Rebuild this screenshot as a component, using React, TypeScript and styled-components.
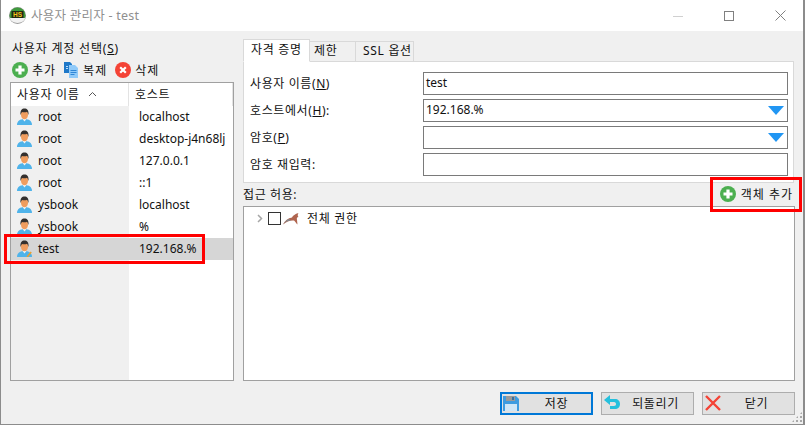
import React from "react";
import styled, { createGlobalStyle } from "styled-components";

const GlobalStyle = createGlobalStyle`
  html, body {
    margin: 0;
    padding: 0;
    background: #fff;
  }
  body {
    font-family: "Noto Sans", "Noto Sans CJK KR", sans-serif;
    font-size: 12px;
    color: #111;
  }
  * {
    box-sizing: border-box;
  }
`;

const Window = styled.div`
  position: relative;
  width: 805px;
  height: 425px;
  display: flex;
  flex-direction: column;
  background: #f0f0f0;
  border: 1px solid #8c8c8c;
  border-top: none;
  border-right-width: 2px;
  overflow: hidden;
`;

const TitleBar = styled.div`
  height: 31px;
  flex: none;
  display: flex;
  align-items: center;
  background: #fff;
  padding-left: 8px;
  gap: 5px;
`;

const TitleText = styled.div`
  flex: 1;
  color: #8f8f8f;
  font-size: 12.5px;
  letter-spacing: 0.25px;
  padding-bottom: 2px;
`;

const WinButton = styled.div`
  width: 46px;
  height: 31px;
  display: flex;
  align-items: center;
  justify-content: center;
`;

const Body = styled.div`
  flex: 1;
  min-height: 0;
  display: flex;
  padding: 8px 8px 0 9px;
  gap: 9px;
`;

const LeftPane = styled.div`
  width: 224px;
  flex: none;
  display: flex;
  flex-direction: column;
`;

const PaneTitle = styled.div`
  height: 20px;
  line-height: 19px;
  padding-left: 2px;
  letter-spacing: 0.8px;
`;

const Toolbar = styled.div`
  height: 23px;
  display: flex;
  align-items: center;
  padding: 0 0 2px 2px;
  gap: 8px;
`;

const ToolItem = styled.div`
  display: flex;
  align-items: center;
  gap: 4px;
  letter-spacing: 1px;
`;

const UserList = styled.div`
  height: 299px;
  background: #fff;
  border: 1px solid #a0a0a0;
  display: flex;
  flex-direction: column;
  position: relative;
`;

const ListHeader = styled.div`
  height: 23px;
  flex: none;
  display: grid;
  grid-template-columns: 118px 1fr;
  align-items: center;
`;

const HeadCell = styled.div`
  height: 23px;
  line-height: 21px;
  padding: 0 0 1px 6px;
  border-right: 1px solid #e3e3e3;
  display: flex;
  align-items: center;
  gap: 8px;
  letter-spacing: 0.7px;
`;

const Rows = styled.div`
  flex: 1;
  display: grid;
  grid-template-columns: 118px 1fr;
  grid-auto-rows: 22px;
  background: linear-gradient(to right, #f0f0f0 118px, #fff 118px);
`;

const Row = styled.div<{ $selected?: boolean }>`
  grid-column: 1 / -1;
  display: grid;
  grid-template-columns: 118px 1fr;
  align-items: center;
  padding-bottom: 1px;
  background: ${(props) => (props.$selected ? "#d6d6d6" : "transparent")};
`;

const UserCell = styled.div`
  display: flex;
  align-items: center;
  padding-left: 6px;
  gap: 6px;
`;

const HostCell = styled.div`
  padding-left: 10px;
`;

const RightPane = styled.div`
  flex: 1;
  min-width: 0;
  display: flex;
  flex-direction: column;
`;

const Tabs = styled.div`
  height: 23px;
  flex: none;
  display: flex;
  align-items: flex-end;
  position: relative;
  z-index: 1;
`;

const Tab = styled.div<{ $active?: boolean; $width: number; $pad: number }>`
  width: ${(props) => props.$width}px;
  height: ${(props) => (props.$active ? 23 : 21)}px;
  line-height: 17px;
  padding-left: ${(props) => props.$pad}px;
  padding-top: ${(props) => (props.$active ? 1 : 0)}px;
  background: ${(props) => (props.$active ? "#fff" : "#f0f0f0")};
  border: 1px solid #d9d9d9;
  border-left-width: ${(props) => (props.$active ? 1 : 0)}px;
  border-bottom-color: ${(props) => (props.$active ? "#fff" : "#d9d9d9")};
  letter-spacing: 0.7px;
  white-space: nowrap;
`;

const TabPanel = styled.div`
  height: 122px;
  flex: none;
  margin: -1px 1px 0 0;
  background: #fff;
  border: 1px solid #d9d9d9;
  padding: 10px 5px 0 6px;
  display: grid;
  grid-template-columns: 173px 1fr;
  grid-auto-rows: 23px;
  row-gap: 4px;
  align-items: center;
`;

const FieldLabel = styled.div`
  letter-spacing: 0.6px;
  white-space: nowrap;
  padding-bottom: 2px;
`;

const Field = styled.div`
  height: 23px;
  border: 1px solid #7a7a7a;
  background: #fff;
  display: flex;
  align-items: center;
  justify-content: space-between;
  padding: 0 3px 2px 2px;
`;

const Arrow = styled.span`
  width: 0;
  height: 0;
  border-left: 8px solid transparent;
  border-right: 8px solid transparent;
  border-top: 9px solid #2196f3;
  margin-top: 2px;
`;

const AccessBar = styled.div`
  height: 23px;
  flex: none;
  display: flex;
  align-items: center;
  justify-content: space-between;
  letter-spacing: 0.6px;
  padding-bottom: 1px;
`;

const AddObject = styled.div`
  display: flex;
  align-items: center;
  gap: 5px;
  padding-right: 2px;
  letter-spacing: 1px;
`;

const TreeBox = styled.div`
  height: 175px;
  flex: none;
  border: 1px solid #a0a0a0;
  background: #fff;
  padding: 3px 0 0 12px;
`;

const TreeRow = styled.div`
  display: flex;
  align-items: center;
  height: 17px;
`;

const TreeLabel = styled.span`
  margin-left: 8px;
  letter-spacing: 0.7px;
  padding-bottom: 2px;
`;

const CheckBox = styled.span`
  width: 13px;
  height: 13px;
  border: 1px solid #333;
  background: #fff;
  margin: 0 2px 0 4px;
`;

const Footer = styled.div`
  height: 23px;
  margin-top: 11px;
  flex: none;
  display: flex;
  justify-content: flex-end;
  gap: 8px;
`;

const Button = styled.div<{ $primary?: boolean }>`
  width: 93px;
  height: 23px;
  background: #e1e1e1;
  border: ${(props) =>
    props.$primary ? "2px solid #0078d7" : "1px solid #adadad"};
  display: flex;
  align-items: center;
  position: relative;
  justify-content: center;
  padding: 0 0 1px ${(props) => (props.$primary ? 20 : 16)}px;
  letter-spacing: 0.6px;
`;

const ButtonIcon = styled.span<{ $primary?: boolean }>`
  position: absolute;
  left: ${(props) => (props.$primary ? 1 : 2)}px;
  top: ${(props) => (props.$primary ? 1 : 2)}px;
  display: flex;
`;

const RedBox = styled.div<{
  $left: number;
  $top: number;
  $width: number;
  $height: number;
}>`
  position: absolute;
  left: ${(props) => props.$left}px;
  top: ${(props) => props.$top}px;
  width: ${(props) => props.$width}px;
  height: ${(props) => props.$height}px;
  border: 3px solid #ff0000;
  pointer-events: none;
`;

const Grip = styled.div`
  position: absolute;
  right: 0;
  bottom: 1px;
  width: 12px;
  height: 12px;
  background-image: radial-gradient(#a8a8a8 1px, transparent 1.2px);
  background-size: 4px 4px;
  clip-path: polygon(100% 0, 100% 100%, 0 100%);
`;

const HsLogo = () => (
  <svg width="17" height="17" viewBox="0 0 17 17">
    <circle cx="8.5" cy="8.5" r="8.5" fill="#9a9a9a" />
    <path d="M1 11a7.500 5 0 0 0 15 0z" fill="#f2f2f2" />
    <path d="M.5 8.500a8 8 0 0 1 16 0c0 1.500-.5 2.500-1 2.500H1.500c-.5 0-1-1-1-2.500z" fill="#3f9a3c" />
    <rect x="2.500" y="4" width="12" height="7" fill="#1f2a14" />
    <text x="8.5" y="10" textAnchor="middle" fontSize="6.500" fontWeight="700" fill="#f5c518" fontFamily="Liberation Sans">
      HS
    </text>
  </svg>
);

const PlusIcon = () => (
  <svg width="16" height="16" viewBox="0 0 16 16">
    <circle cx="8" cy="8" r="8" fill="#4caf50" />
    <path d="M6.400 3.500h3.200v2.900h2.900v3.200H9.600v2.900H6.400V9.600H3.500V6.400h2.900z" fill="#fff" />
  </svg>
);

const CopyIcon = () => (
  <svg width="15" height="17" viewBox="0 0 15 17">
    <path d="M0 1h6l2 2v9H0z" fill="#1e78c8" />
    <path d="M5 4h6l3 3v10H5z" fill="#90caf9" />
    <path d="M6.500 9h6v1h-6zM6.500 11h6v1h-6zM6.500 13h4v1h-4z" fill="#2f86d6" />
    <path d="M2 5h2v1H2zM2 7h2v1H2z" fill="#bbdefb" />
  </svg>
);

const DeleteIcon = () => (
  <svg width="16" height="16" viewBox="0 0 16 16">
    <circle cx="8" cy="8" r="8" fill="#f44336" />
    <path d="M5.200 5.200l5.600 5.600M10.800 5.200l-5.600 5.600" stroke="#fff" strokeWidth="2.200" />
  </svg>
);

const UserIcon = ({ editing }: { editing?: boolean }) => (
  <svg width="15" height="17" viewBox="0 0 15 17">
    <path d="M0 17c0-4 3-6 7.500-6s7.500 2 7.500 6z" fill="#4fb3ea" />
    <path d="M5.500 11h4l-2 2.500z" fill="#f4f4f4" />
    <ellipse cx="7.500" cy="6.500" rx="3.600" ry="4.800" fill="#ef9d5f" />
    <path d="M3.500 7C3 2 5 .5 7.500 .5S12 2 11.500 7c-.5-1.500-1-2.800-1.500-3.200-1.500.7-3.500.7-5 .2C4.500 4.500 4 5.500 3.500 7z" fill="#33302e" />
    {editing && <path d="M9.500 16.500l4-5 1.300 1-4 5z" fill="#e8a030" />}
  </svg>
);

const Dolphin = () => (
  <svg width="16" height="12" viewBox="0 0 16 12">
    <path d="M0 11.500C2 7.500 5 5 9 4.500 10 2.500 12 1 15.500 0 14.500 1.500 14.500 3 15.500 4c-1.500 0-2 1-1.500 3l.5 4.500C13 10 12 8.500 11 7.500 7 7 4 8.500 0 11.500z" fill="#b0654f" />
    <path d="M0 11.500C2 9 5 7.500 8 7.500L6 6C3.500 7 1.500 9 0 11.500z" fill="#7f8d96" />
  </svg>
);

const Chevron = () => (
  <svg width="8" height="9" viewBox="0 0 8 9">
    <path d="M2 1l3.500 3.500L2 8" fill="none" stroke="#a6a6a6" strokeWidth="1.500" />
  </svg>
);

const SortUp = () => (
  <svg width="9" height="6" viewBox="0 0 9 6">
    <path d="M1 5l3.500-3.500L8 5" fill="none" stroke="#555" strokeWidth="1" />
  </svg>
);

const SaveIcon = () => (
  <svg width="16" height="17" viewBox="0 0 16 17">
    <path d="M0 1h13l3 3v12H0z" fill="#3d9be0" />
    <path d="M3 1h9v5H3z" fill="#9a9a9a" />
    <path d="M9 2h2v3H9z" fill="#3d6f9c" />
    <path d="M2 9h12v7H2z" fill="#cfe6f7" />
  </svg>
);

const UndoIcon = () => (
  <svg width="16" height="15" viewBox="0 0 16 15">
    <path d="M6 0L0 5l6 5V7h4c1.500 0 2 1 2 2s-.5 2-2 2H6v3h5c3 0 5-2 5-5s-2-5-5-5H6z" fill="#26c0dd" />
  </svg>
);

const CrossIcon = () => (
  <svg width="16" height="16" viewBox="0 0 16 16">
    <path d="M1 1l14 14M15 1L1 15" stroke="#f44336" strokeWidth="2.400" />
  </svg>
);

const users = [
  { name: "root", host: "localhost" },
  { name: "root", host: "desktop-j4n68lj" },
  { name: "root", host: "127.0.0.1" },
  { name: "root", host: "::1" },
  { name: "ysbook", host: "localhost" },
  { name: "ysbook", host: "%" },
  { name: "test", host: "192.168.%", selected: true },
];

export default function App() {
  return (
    <Window>
      <GlobalStyle />
      <TitleBar>
        <HsLogo />
        <TitleText>사용자 관리자 - test</TitleText>
        <WinButton>
          <svg width="10" height="10" viewBox="0 0 10 10">
            <path d="M0 5.500h10" stroke="#d0d0d0" strokeWidth="1" />
          </svg>
        </WinButton>
        <WinButton>
          <svg width="10" height="10" viewBox="0 0 10 10">
            <rect x="0.500" y="0.500" width="9" height="9" fill="none" stroke="#808080" />
          </svg>
        </WinButton>
        <WinButton>
          <svg width="11" height="11" viewBox="0 0 11 11">
            <path d="M.5.500l10 10M10.500.500l-10 10" stroke="#808080" strokeWidth="1" />
          </svg>
        </WinButton>
      </TitleBar>
      <Body>
        <LeftPane>
          <PaneTitle>
            사용자 계정 선택(<u>S</u>)
          </PaneTitle>
          <Toolbar>
            <ToolItem>
              <PlusIcon />
              추가
            </ToolItem>
            <ToolItem>
              <CopyIcon />
              복제
            </ToolItem>
            <ToolItem>
              <DeleteIcon />
              삭제
            </ToolItem>
          </Toolbar>
          <UserList>
            <ListHeader>
              <HeadCell>
                사용자 이름 <SortUp />
              </HeadCell>
              <HeadCell>호스트</HeadCell>
            </ListHeader>
            <Rows>
              {users.map((user, i) => (
                <Row key={i} $selected={user.selected}>
                  <UserCell>
                    <UserIcon editing={user.selected} />
                    {user.name}
                  </UserCell>
                  <HostCell>{user.host}</HostCell>
                </Row>
              ))}
            </Rows>
          </UserList>
        </LeftPane>
        <RightPane>
          <Tabs>
            <Tab $active $width={67} $pad={7}>
              자격 증명
            </Tab>
            <Tab $width={46} $pad={4}>
              제한
            </Tab>
            <Tab $width={58} $pad={7}>
              SSL 옵션
            </Tab>
          </Tabs>
          <TabPanel>
            <FieldLabel>
              사용자 이름(<u>N</u>)
            </FieldLabel>
            <Field>test</Field>
            <FieldLabel>
              호스트에서(<u>H</u>):
            </FieldLabel>
            <Field>
              192.168.%
              <Arrow />
            </Field>
            <FieldLabel>
              암호(<u>P</u>)
            </FieldLabel>
            <Field>
              <span />
              <Arrow />
            </Field>
            <FieldLabel>암호 재입력:</FieldLabel>
            <Field />
          </TabPanel>
          <AccessBar>
            접근 허용:
            <AddObject>
              <PlusIcon />
              객체 추가
            </AddObject>
          </AccessBar>
          <TreeBox>
            <TreeRow>
              <Chevron />
              <CheckBox />
              <Dolphin />
              <TreeLabel>전체 권한</TreeLabel>
            </TreeRow>
          </TreeBox>
          <Footer>
            <Button $primary>
              <ButtonIcon $primary>
                <SaveIcon />
              </ButtonIcon>
              저장
            </Button>
            <Button>
              <ButtonIcon>
                <UndoIcon />
              </ButtonIcon>
              되돌리기
            </Button>
            <Button>
              <ButtonIcon>
                <CrossIcon />
              </ButtonIcon>
              닫기
            </Button>
          </Footer>
        </RightPane>
      </Body>
      <RedBox $left={3} $top={234} $width={201} $height={30} />
      <RedBox $left={709} $top={177} $width={92} $height={35} />
      <Grip />
    </Window>
  );
}
